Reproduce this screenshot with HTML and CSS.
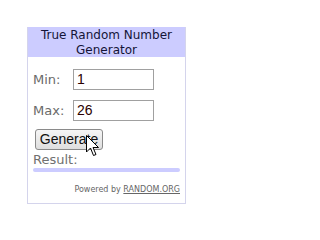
FILE: index.html
```html
<!DOCTYPE html>
<html>
<head>
<meta charset="utf-8">
<link rel="stylesheet" href="styles.css">
</head>
<body>
<div class="widget">
  <div class="header">True Random Number<br>Generator</div>
  <div class="content">
    <div class="row row-min">
      <span class="label">Min:</span>
      <span class="input">1</span>
    </div>
    <div class="row row-max">
      <span class="label">Max:</span>
      <span class="input">26</span>
    </div>
    <div class="btn-wrap">
      <span class="button">Generate</span>
      <svg class="cursor" width="13" height="22" viewBox="0 0 13 22">
        <path d="M0.5 0.5 L0.5 17 L4.5 13 L7.5 20.5 L10 19.5 L7 12.5 L12.5 12.5 Z" fill="#fff" stroke="#000" stroke-width="1" stroke-linejoin="miter"/>
      </svg>
    </div>
    <div class="result">Result:</div>
    <div class="bar"></div>
    <div class="powered">Powered by <span class="link">RANDOM.ORG</span></div>
  </div>
</div>
</body>
</html>
```
FILE: styles.css
```css
body {
  margin: 0;
  background: #ffffff;
  font-family: "DejaVu Sans", Verdana, sans-serif;
}
.widget {
  margin: 27px 0 0 27px;
  width: 157px;
  border: 1px solid #d4d4ec;
  border-top: none;
}
.header {
  background: #ccccff;
  color: #141438;
  font-size: 12px;
  line-height: 15px;
  text-align: center;
  height: 29px;
  padding-top: 1px;
}
.content {
  padding: 12px 5px 8px 5px;
}
.row {
  display: flex;
  align-items: center;
  height: 21px;
}
.row-max {
  margin-top: 10px;
}
.label {
  width: 40px;
  color: #6a6a6a;
  font-size: 13px;
}
.input {
  box-sizing: border-box;
  width: 81px;
  height: 21px;
  border: 1px solid #a0a0a0;
  font-family: "Liberation Sans", Arial, sans-serif;
  font-size: 14px;
  line-height: 19px;
  padding-left: 3px;
  color: #2a0000;
}
.btn-wrap {
  position: relative;
  margin-top: 8px;
  margin-left: 2px;
  height: 21px;
}
.button {
  display: inline-block;
  box-sizing: border-box;
  width: 68px;
  height: 21px;
  border: 1px solid #8a8a8a;
  border-radius: 3px;
  background: linear-gradient(#f6f6f6, #dedede);
  font-family: "Liberation Sans", Arial, sans-serif;
  font-size: 14px;
  line-height: 19px;
  text-align: center;
  color: #111;
}
.cursor {
  position: absolute;
  left: 51px;
  top: 6px;
}
.result {
  margin-top: 2px;
  color: #707070;
  font-size: 13px;
  line-height: 15px;
}
.bar {
  height: 4px;
  background: #ccccff;
  border-radius: 2px;
  margin-top: 1px;
}
.powered {
  margin-top: 13px;
  text-align: right;
  font-size: 8px;
  line-height: 10px;
  color: #666;
}
.link {
  text-decoration: underline;
}
```
